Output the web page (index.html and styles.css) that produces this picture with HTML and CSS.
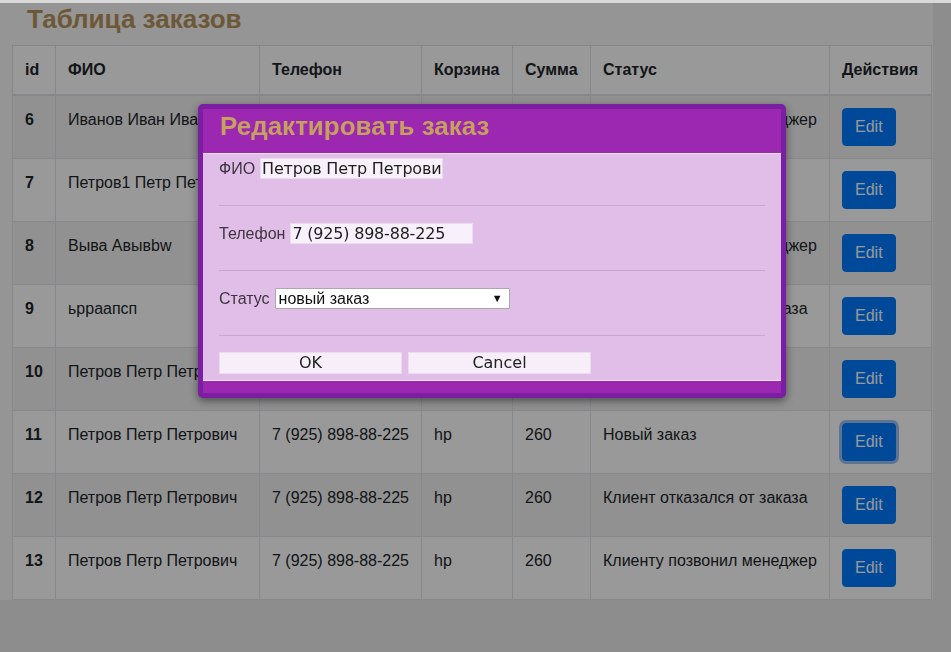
FILE: index.html
```html
<!DOCTYPE html>
<html lang="ru">
<head>
<meta charset="utf-8">
<title>Таблица заказов</title>
<link rel="stylesheet" href="styles.css">
</head>
<body>
<div class="page">
  <h2 class="page-title">Таблица заказов</h2>
  <table class="orders">
    <colgroup>
      <col class="c-id"><col class="c-fio"><col class="c-phone"><col class="c-cart"><col class="c-sum"><col class="c-status"><col class="c-act">
    </colgroup>
    <thead>
      <tr><th>id</th><th>ФИО</th><th>Телефон</th><th>Корзина</th><th>Сумма</th><th>Статус</th><th>Действия</th></tr>
    </thead>
    <tbody>
      <tr><th>6</th><td>Иванов Иван Иванович</td><td>7 (925) 898-88-225</td><td>hp</td><td>260</td><td>Клиенту позвонил менеджер</td><td><button class="btn-edit">Edit</button></td></tr>
      <tr><th>7</th><td>Петров1 Петр Петрович</td><td>7 (925) 898-88-225</td><td>hp</td><td>260</td><td>Новый заказ</td><td><button class="btn-edit">Edit</button></td></tr>
      <tr><th>8</th><td>Выва Авывbw</td><td>7 (925) 898-88-225</td><td>hp</td><td>260</td><td>Клиенту позвонил менеджер</td><td><button class="btn-edit">Edit</button></td></tr>
      <tr><th>9</th><td>ьрраапсп</td><td>7 (925) 898-88-225</td><td>hp</td><td>260</td><td>Клиент отказался от заказа</td><td><button class="btn-edit">Edit</button></td></tr>
      <tr><th>10</th><td>Петров Петр Петрович</td><td>7 (925) 898-88-225</td><td>hp</td><td>260</td><td>Новый заказ</td><td><button class="btn-edit">Edit</button></td></tr>
      <tr><th>11</th><td>Петров Петр Петрович</td><td>7 (925) 898-88-225</td><td>hp</td><td>260</td><td>Новый заказ</td><td><button class="btn-edit is-focus">Edit</button></td></tr>
      <tr><th>12</th><td>Петров Петр Петрович</td><td>7 (925) 898-88-225</td><td>hp</td><td>260</td><td>Клиент отказался от заказа</td><td><button class="btn-edit">Edit</button></td></tr>
      <tr><th>13</th><td>Петров Петр Петрович</td><td>7 (925) 898-88-225</td><td>hp</td><td>260</td><td>Клиенту позвонил менеджер</td><td><button class="btn-edit">Edit</button></td></tr>
    </tbody>
  </table>
</div>

<div class="backdrop"></div>

<div class="modal">
  <div class="modal-head">
    <h3 class="modal-title">Редактировать заказ</h3>
  </div>
  <div class="modal-body">
    <div class="field">
      <label class="field-label">ФИО</label>
      <input class="field-input" type="text" value="Петров Петр Петрович">
    </div>
    <hr class="sep">
    <div class="field">
      <label class="field-label">Телефон</label>
      <input class="field-input" type="text" value="7 (925) 898-88-225">
    </div>
    <hr class="sep">
    <div class="field">
      <label class="field-label">Статус</label>
      <div class="select-wrap">
        <select class="field-select">
          <option>новый заказ</option>
          <option>Клиенту позвонил менеджер</option>
          <option>Клиент отказался от заказа</option>
        </select>
        <span class="select-arrow">▼</span>
      </div>
    </div>
    <hr class="sep">
    <div class="actions">
      <button class="btn-light">OK</button>
      <button class="btn-light">Cancel</button>
    </div>
  </div>
</div>
</body>
</html>
```

FILE: styles.css
```css
html, body {
  margin: 0;
  padding: 0;
}
body {
  background: #ececec;
  border-top: 3px solid #d9d9d9;
  font-family: "Liberation Sans", Arial, sans-serif;
  font-size: 16px;
  color: #212529;
  min-height: 649px;
}
.page {
  width: 933px;
  box-sizing: border-box;
  padding: 0 2px 0 12px;
  background: #f8f8f8;
}
.page-title {
  margin: 0 0 10px;
  padding-left: 15px;
  font-size: 26px;
  line-height: 32px;
  font-weight: bold;
  color: #b5935c;
}
.orders {
  width: 919px;
  border-collapse: collapse;
  table-layout: fixed;
  background: #fff;
  border: 1px solid #dee2e6;
}
.c-id { width: 43px; }
.c-fio { width: 204px; }
.c-phone { width: 162px; }
.c-cart { width: 91px; }
.c-sum { width: 78px; }
.c-status { width: 239px; }
.c-act { width: 102px; }
.orders th, .orders td {
  padding: 12px;
  line-height: 24px;
  vertical-align: top;
  text-align: left;
  border: 1px solid #dee2e6;
  white-space: nowrap;
  overflow: hidden;
}
.orders thead th {
  border-bottom: 2px solid #dee2e6;
  font-weight: bold;
}
.orders tbody th { font-weight: bold; }
.orders tbody tr:nth-of-type(odd) { background: #f2f2f2; }
.btn-edit {
  font-family: "Liberation Sans", Arial, sans-serif;
  font-size: 16px;
  line-height: 24px;
  padding: 6px 12px;
  border: 1px solid #007bff;
  border-radius: 4px;
  background: #007bff;
  color: #fff;
}
.btn-edit.is-focus {
  box-shadow: 0 0 0 3px rgba(90, 150, 235, 0.6);
}
.backdrop {
  position: fixed;
  top: 3px;
  left: 0;
  right: 0;
  bottom: 0;
  background: rgba(0, 0, 0, 0.4);
}
.modal {
  position: absolute;
  left: 198px;
  top: 104px;
  width: 588px;
  box-sizing: border-box;
  border: 5px solid #7b1fa2;
  border-radius: 5px;
  background: #9c27b0;
  padding-bottom: 12px;
  box-shadow: 0 3px 9px rgba(0, 0, 0, 0.45);
}
.modal-head {
  height: 44px;
  padding: 0 17px;
  border-bottom: 1px solid #f3e5f5;
}
.modal-title {
  margin: 0;
  font-size: 26px;
  line-height: 34px;
  font-weight: bold;
  color: #c6a060;
}
.modal-body {
  background: #e1bee7;
  padding: 4px 16px 6px;
  border-bottom: 1px solid #f3e5f5;
}
.field {
  display: flex;
  align-items: center;
  gap: 5px;
  height: 21px;
}
.field-label {
  font-size: 16px;
  color: #3d3540;
}
.field-input {
  width: 183px;
  height: 21px;
  box-sizing: border-box;
  padding: 0 1px;
  margin: 0;
  border: 1px solid #e9dcec;
  background: #f8f0fb;
  font-family: "DejaVu Sans", Verdana, sans-serif;
  font-size: 16px;
  letter-spacing: -0.2px;
  color: #1e1e1e;
  outline: none;
}
.select-wrap {
  position: relative;
  width: 235px;
  height: 21px;
}
.field-select {
  appearance: none;
  -webkit-appearance: none;
  width: 235px;
  height: 21px;
  box-sizing: border-box;
  margin: 0;
  padding: 0 3px;
  border: 1px solid #a9a9a9;
  border-radius: 1px;
  background: #fff;
  font-family: "Liberation Sans", Arial, sans-serif;
  font-size: 16px;
  line-height: 19px;
  color: #111;
}
.select-arrow {
  position: absolute;
  right: 7px;
  top: 5px;
  font-size: 11px;
  line-height: 11px;
  color: #111;
  pointer-events: none;
}
.sep {
  margin: 26px 0 17px;
  border: 0;
  border-top: 1px solid #caa5d2;
  height: 0;
}
.actions {
  display: flex;
  gap: 6px;
  margin-top: -1px;
}
.btn-light {
  width: 183px;
  height: 22px;
  box-sizing: border-box;
  margin: 0;
  padding: 0;
  border: 1px solid #eadcee;
  background: #f7eefa;
  font-family: "DejaVu Sans", Verdana, sans-serif;
  font-size: 16px;
  line-height: 20px;
  color: #222;
}
```
